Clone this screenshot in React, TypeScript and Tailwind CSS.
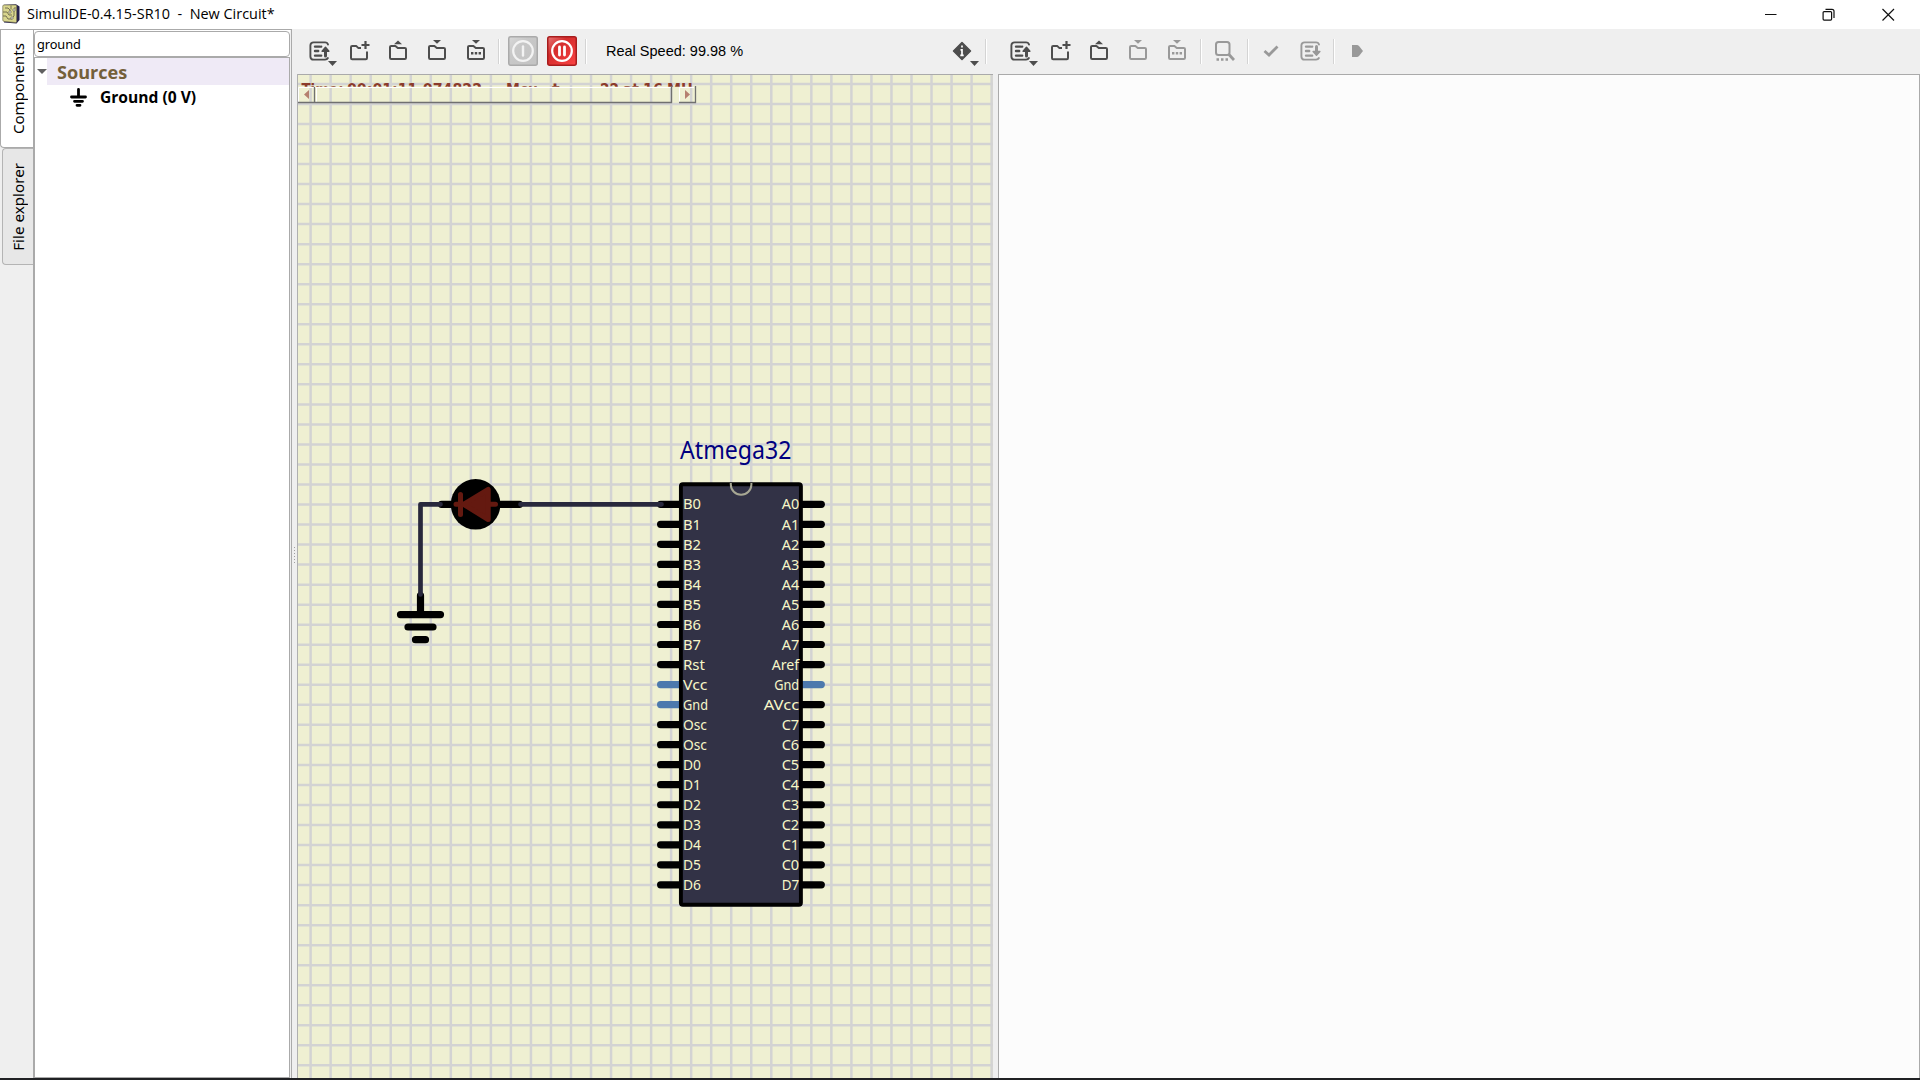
import React from "react";

const dark = "#4d4d4d";
const faded = "#999999";

function ListIcon({ color = dark, down = false }: { color?: string; down?: boolean }) {
  return (
    <svg className="h-5 w-5.5 shrink-0" viewBox="0 0 22 20" fill="none" stroke={color} strokeLinecap="round">
      <path d="M19 3.6C18.6 2 17.6 1.4 16 1.4H4.6C2.6 1.4 1.4 2.6 1.4 4.6v10.8c0 2 1.2 3.2 3.2 3.2H16c1.4 0 2.4-.5 2.9-1.6" strokeWidth="1.9" />
      <path d="M6 5.6h4.5M6 10h3.2M6 14.6h5M12 5.6h.2M12 14.6h.2" strokeWidth="2.4" />
      <path d={down ? "M16.5 5.5v6" : "M16.500 15V9"} strokeWidth="3" />
      <path d={down ? "M13.1 10.5h6.8L16.5 14.3z" : "M13.1 10.2h6.8L16.5 6.2z"} fill={color} strokeWidth="1.4" strokeLinejoin="round" />
    </svg>
  );
}

function Folder({ kind, color = dark }: { kind: "new" | "open" | "save" | "saveas"; color?: string }) {
  return (
    <svg className="h-5.5 w-5.5 shrink-0" viewBox="0 0 22 22" fill="none" stroke={color} strokeWidth="2" strokeLinejoin="round">
      <path d={kind === "new"
        ? "M13 7.9H10.2L8.4 6.1H4.2Q3 6.1 3 7.3V18Q3 19.2 4.2 19.2H17.8Q19 19.2 19 18V11.5"
        : "M4.2 5.9H8.4L10.8 7.9H17.8Q19 7.9 19 9.1V17.8Q19 19 17.8 19H4.2Q3 19 3 17.8V7.1Q3 5.9 4.2 5.9z"} />
      {kind === "new" && <path d="M17.5 1v8M13.500 5h8" strokeWidth="2.2" />}
      {kind === "open" && <path d="M7 4.2h8L11 .4z" fill={color} stroke="none" />}
      {(kind === "save" || kind === "saveas") && <path d="M7 0h8L11 3.8z" fill={color} stroke="none" />}
      {kind === "saveas" && <path d="M6 13.2h2.4M9.8 13.2h2.4M13.6 13.2H16" strokeWidth="2.4" />}
    </svg>
  );
}

function Cell({ children, arrow = false, className = "w-[39px]" }: { children: React.ReactNode; arrow?: boolean; className?: string }) {
  return (
    <div className={`relative flex h-full shrink-0 items-center justify-center ${className}`}>
      {children}
      {arrow && (
        <svg className="absolute top-[32px] right-[2px] h-[5px] w-[9px]" viewBox="0 0 9 5"><path d="M0 0h9L4.5 5z" fill={dark} /></svg>
      )}
    </div>
  );
}

function Sep() {
  return <div className="h-[25px] w-[2px] shrink-0 border-r border-white bg-[#d4d4d4]" />;
}

function SimButton({ on = false }: { on?: boolean }) {
  return (
    <svg className="h-[30px] w-[30px] shrink-0" viewBox="0 0 30 30" fill="none">
      <defs>
        <linearGradient id={on ? "pauseFill" : "powerFill"} x1="0" y1="0" x2="1" y2="1">
          <stop offset="0" stopColor={on ? "#e87878" : "#d9d9d9"} />
          <stop offset=".35" stopColor={on ? "#d42c2c" : "#c8c8c8"} />
          <stop offset="1" stopColor={on ? "#fb4444" : "#c3c3c3"} />
        </linearGradient>
      </defs>
      <rect x=".75" y=".75" width="28.5" height="28.5" rx="2" fill={on ? "url(#pauseFill)" : "url(#powerFill)"} stroke={on ? "#a81c1c" : "#aaaaaa"} strokeWidth="1.5" />
      <circle cx="15" cy="15" r="9.8" stroke={on ? "#fff" : "#f3f3f3"} strokeWidth="2.2" />
      {on ? <path d="M12.5 11v8M17.5 11v8" stroke="#fff" strokeWidth="2.8" strokeLinecap="round" /> : <path d="M15 10.5v9" stroke="#f3f3f3" strokeWidth="2.4" strokeLinecap="round" />}
    </svg>
  );
}

function AppLogo() {
  return (
    <svg className="mb-px h-5 w-[18px]" viewBox="0 0 18 20" fill="none">
      <path d="M2 .8L14 .3 17.5 2.5V16L14.5 19.5 2 18.6z" fill="#24204e" />
      <path d="M.8 2Q.8 1 2 1H13.5Q14.6 1 14.6 2V17.5Q14.6 18.7 13.5 18.5L2 17.4Q.8 17.3 .8 16z" fill="#d9d68e" stroke="#77734f" strokeWidth=".7" />
      <path d="M3 4h3l2 2v3M1 8h4l2 3h3M1 12h3l2 3h4M9 1.5v4M12 6v6l-2 2M13 3v2" stroke="#69644a" strokeWidth=".9" />
      <g fill="#fff" stroke="#5d5840" strokeWidth=".7"><circle cx="8" cy="8" r="1.2" /><circle cx="12" cy="6" r="1.2" /><circle cx="10" cy="14" r="1.2" /></g>
    </svg>
  );
}

const left = ["B0", "B1", "B2", "B3", "B4", "B5", "B6", "B7", "Rst", "Vcc", "Gnd", "Osc", "Osc", "D0", "D1", "D2", "D3", "D4", "D5", "D6"];
const right = ["A0", "A1", "A2", "A3", "A4", "A5", "A6", "A7", "Aref", "Gnd", "AVcc", "C7", "C6", "C5", "C4", "C3", "C2", "C1", "C0", "D7"];
const labelWidth: Record<string, number> = { Rst: 22, Vcc: 24.5, Gnd: 25, Osc: 24, Aref: 27.5, AVcc: 35.5 };
const step = 20.03;
const cols = Array.from({ length: 35 }, (_, i) => 310.6 + i * step);
const rows = Array.from({ length: 51 }, (_, i) => 83.9 + i * step);

function Circuit() {
  return (
    <svg className="block h-[1003px] w-[695px] bg-[#eff0d2]" viewBox="298 75 695 1003" fill="none">
      <g stroke="#d3d3d3" strokeWidth="2.5">
        {cols.map((x) => <path key={x} d={`M${x} 75V1078`} />)}
        {rows.map((y) => <path key={y} d={`M298 ${y}H993`} />)}
      </g>
      <clipPath id="status"><rect x="298" y="83" width="394" height="3.8" /></clipPath>
      <g clipPath="url(#status)" className="font-['DejaVu_Sans'] text-[16px] font-bold" fill="#8b3b2b">
        <text y="95.4" x="301.500" textLength="42" lengthAdjust="spacingAndGlyphs">Time:</text>
        <text y="95.4" x="347" textLength="135" lengthAdjust="spacingAndGlyphs">00:01:11.074822</text>
        <text y="95.4" x="506" textLength="32" lengthAdjust="spacingAndGlyphs">Mcu</text>
        <text y="95.4" x="552">t</text>
        <text y="95.4" x="600" textLength="19" lengthAdjust="spacingAndGlyphs">22</text>
        <text y="95.4" x="623" textLength="16" lengthAdjust="spacingAndGlyphs">at</text>
        <text y="95.4" x="643" textLength="20" lengthAdjust="spacingAndGlyphs">16</text>
        <text y="95.4" x="667" textLength="34" lengthAdjust="spacingAndGlyphs">MHz</text>
      </g>
      <path d="M298.5 102V87.500H671M316.500 88v14M679.500 102V87.500H694" stroke="#fff" />
      <path d="M298 102.500H671.500V86M314.500 87v15.500M679 102.500H695.500V86" stroke="#707070" strokeWidth="1.300" />
      <path d="M309 90v9l-5-4.500zM685 90v9l5-4.500z" fill="#b5806f" />

      <path d="M441.5 504.300H519.500M420.500 595.500V612M400.500 614.600H440.500M408 627H433M415.500 639.700H425.500" stroke="#000" strokeWidth="7.2" strokeLinecap="round" />
      <ellipse cx="475.6" cy="504.300" rx="24.800" ry="25.300" fill="#000" />
      <g stroke="#641910" strokeWidth="5" strokeLinecap="round" strokeLinejoin="round">
        <path d="M456 504.300H495.500M460.500 494.500V514.500" />
        <path d="M463.500 504.300L488.200 489.500V519.500z" fill="#641910" />
      </g>

      {left.map((name, i) => {
        const y = 504.3 + i * step;
        return (
          <g key={i} strokeWidth="7.2" strokeLinecap="round">
            <path d={`M660.6 ${y}H680`} stroke={i === 9 || i === 10 ? "#4c79ad" : "#000"} />
            <path d={`M802 ${y}H821.300`} stroke={i === 9 ? "#4c79ad" : "#000"} />
          </g>
        );
      })}
      <path d="M440.500 504.300H420.500V594.500M520.500 504.300H661.500" stroke="#28283c" strokeWidth="4.700" strokeLinecap="round" strokeLinejoin="round" />
      <rect x="680.9" y="484.300" width="120" height="420.500" rx="2" fill="#323246" stroke="#000" strokeWidth="3.900" />
      <path d="M730.8 483v1.500a10.300 10.300 0 0 0 20.600 0V483" stroke="#a7a793" strokeWidth="2" />
      <g className="font-['Noto_Sans'] text-[15px]" fill="#f7f7c8">
        {left.map((name, i) => {
          const y = i === 0 ? 509 : 510 + i * 20;
          const other = right[i];
          const w = labelWidth[other] ?? 17.5;
          return (
            <React.Fragment key={i}>
              <text x="683" y={y} textLength={labelWidth[name] ?? 18} lengthAdjust="spacingAndGlyphs">{name}</text>
              <text x={799.2 - w} y={y} textLength={w} lengthAdjust="spacingAndGlyphs">{other}</text>
            </React.Fragment>
          );
        })}
      </g>
      <text x="680" y="458.700" textLength="111.500" lengthAdjust="spacingAndGlyphs" className="font-['Noto_Sans'] text-[26px]" fill="#000080">Atmega32</text>
    </svg>
  );
}

function Sidebar() {
  return (
    <aside className="flex h-full w-[292px] shrink-0 border-t border-r border-[#aaaaaa] bg-[#efefef] font-['Open_Sans',sans-serif]">
      <div className="flex w-[33px] shrink-0 flex-col items-end">
        <div className="flex h-[118px] w-[33px] items-center justify-center rounded-bl border-b border-l border-[#aaaaaa] bg-white pt-px pl-px">
          <span className="rotate-180 font-['Noto_Sans'] text-[15.1px] leading-5 [writing-mode:vertical-rl]">Components</span>
        </div>
        <div className="flex h-[117px] w-[31px] items-center justify-center rounded-l border border-r-0 border-[#b4b4b4] bg-[#e7e7e7]">
          <span className="rotate-180 font-['Noto_Sans'] text-[15.2px] leading-5 [writing-mode:vertical-rl]">File explorer</span>
        </div>
      </div>
      <div className="flex w-[257px] shrink-0 flex-col border-l border-[#aaaaaa] bg-white pt-px pr-px">
        <div className="flex h-[26px] w-[256px] shrink-0 items-center rounded-sm border border-[#aaaaaa] bg-white pt-px pl-[2px] font-['Noto_Sans'] text-[12.8px] tracking-[-0.1px]">ground</div>
        <div className="flex w-[256px] grow flex-col border border-[#aaaaaa]">
          <div className="flex h-[27px] items-center">
            <div className="flex w-[12px] justify-end"><svg className="h-[5px] w-[10px] shrink-0" viewBox="0 0 10 5"><path d="M0 0h10L5 5z" fill="#606060" /></svg></div>
            <div className="flex h-full grow items-center bg-[#efeaf6] pt-[2px] pl-[10px] text-[18.1px] font-bold text-[#74603a]">Sources</div>
          </div>
          <div className="flex h-[25px] items-center">
            <svg className="ml-[35px] h-[19px] w-[17px]" viewBox="0 0 17 19" fill="none" stroke="#000" strokeWidth="2.800" strokeLinecap="round"><path d="M8.500 1.500V8M1.500 9H15.500M4.500 13.300H12.500M7 17.300H10" /></svg>
            <span className="ml-[13px] text-[15.6px] font-bold">Ground (0 V)</span>
          </div>
        </div>
      </div>
    </aside>
  );
}

export default function App() {
  return (
    <div className="flex h-[1080px] w-[1920px] flex-col overflow-hidden bg-[#efefef] text-black">
      <header className="flex h-[29px] shrink-0 items-center bg-white pl-[2px]">
        <AppLogo />
        <span className="mb-px ml-[7px] grow font-['Open_Sans',sans-serif] text-[14.43px] whitespace-pre">SimulIDE-0.4.15-SR10  -  New Circuit*</span>
        <svg className="mr-[25px] mb-px h-[13px] w-[131px]" viewBox="0 0 131 13" fill="none" stroke="#111" strokeWidth="1.200">
          <path d="M1 6.500H12.500M118.500 1L130 12.500M130 1L118.500 12.500" />
          <rect x="59.100" y="3.600" width="8.500" height="8.500" rx="1" />
          <path d="M61.500 1.300H68Q70 1.300 70 3.300V10" />
        </svg>
      </header>
      <div className="flex h-[1049px] shrink-0">
        <Sidebar />
        <section className="flex w-[706px] shrink-0 flex-col">
          <div className="flex h-[45px] shrink-0 items-center pb-px pl-[8px]">
            <Cell arrow><ListIcon /></Cell>
            <Cell><Folder kind="new" /></Cell>
            <Cell><Folder kind="open" /></Cell>
            <Cell><Folder kind="save" /></Cell>
            <Cell className="w-[40px]"><Folder kind="saveas" /></Cell>
            <div className="ml-[2px] flex items-center gap-[8px]"><Sep /><div className="flex gap-[9px]"><SimButton /><SimButton on /></div><Sep /></div>
            <span className="mt-px ml-[19px] grow font-['Liberation_Sans'] text-[14.500px]">Real Speed: 99.98 %</span>
            <Cell arrow className="mr-[4px] w-[38px]">
              <svg className="h-5 w-5" viewBox="0 0 20 20"><path d="M10 1.500L18.500 10 10 18.500 1.500 10z" fill={dark} stroke={dark} strokeWidth="1.500" strokeLinejoin="round" /><path d="M10 4.500v2M8.500 8.800H10V14M8.300 14.300h3.400" stroke="#fff" strokeWidth="1.700" fill="none" /></svg>
            </Cell>
            <Sep />
            <div className="w-[11px]" />
          </div>
          <div className="flex">
            <div className="flex w-[6px] flex-col items-center justify-center gap-[2px] border-r border-[#b0b0b0] pb-[42px]">
              {[0, 1, 2, 3, 4, 5].map((i) => <span key={i} className="h-px w-px bg-[#a0a0a0]" />)}
            </div>
            <div className="border-t border-[#aaaaaa]"><Circuit /></div>
          </div>
        </section>
        <section className="flex grow flex-col">
          <div className="flex h-[45px] shrink-0 items-center pb-px pl-[3px]">
            <Cell arrow><ListIcon /></Cell>
            <Cell><Folder kind="new" /></Cell>
            <Cell><Folder kind="open" /></Cell>
            <Cell><Folder kind="save" color={faded} /></Cell>
            <Cell className="mr-[3px] w-[40px]"><Folder kind="saveas" color={faded} /></Cell>
            <Sep />
            <Cell className="w-[45px]">
              <svg className="h-5 w-5" viewBox="0 0 20 20" fill="none" stroke={faded} strokeWidth="2"><rect x="1" y="1" width="13.500" height="13" rx="2.500" /><path d="M13.500 13L19 19" strokeWidth="2.800" /><path d="M1.500 18.500H4M6 18.500h2.500M10.500 18.500H13" strokeWidth="2.400" /></svg>
            </Cell>
            <Sep />
            <Cell className="ml-px w-[42px]">
              <svg className="h-3 w-4" viewBox="0 0 16 12" fill="none" stroke={faded} strokeWidth="2.800"><path d="M1.500 6L6 10 14.500 1.500" /></svg>
            </Cell>
            <Cell className="w-[37px]"><ListIcon color={faded} down /></Cell>
            <div className="w-[4px]" />
            <Sep />
            <Cell className="w-[44px]">
              <svg className="h-3 w-[11px]" viewBox="0 0 11 12"><path d="M0 0H5Q6 0 7 1L11 6 7 11Q6 12 5 12H0z" fill={faded} /></svg>
            </Cell>
          </div>
          <div className="grow border-t border-r border-l border-[#aaaaaa] bg-[#fcfcfc]" />
        </section>
      </div>
      <div className="h-[2px] shrink-0 bg-[#202124]" />
    </div>
  );
}
